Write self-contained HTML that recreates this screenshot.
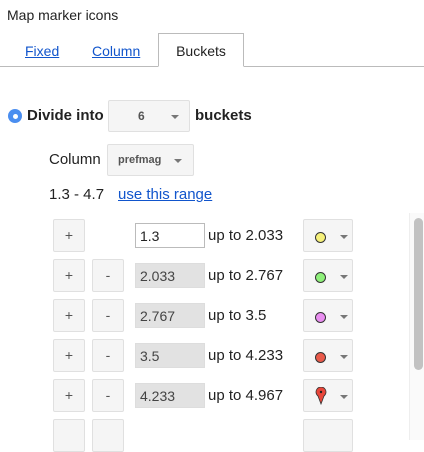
<!DOCTYPE html>
<html><head><style>
*{margin:0;padding:0;box-sizing:border-box}
body{width:424px;height:440px;background:#fff;font-family:"Liberation Sans",Arial,sans-serif;font-size:13px;color:#222;position:relative;overflow:hidden}
.a{position:absolute}
a{color:#15c;text-decoration:underline}
.btn{position:absolute;background:#f5f5f5;border:1px solid #e0e0e0;border-radius:2px;color:#555;text-align:center;font-size:14px}
.inp{position:absolute;width:70px;height:25px;border:1px solid #ddd;background:#e2e2e2;padding:4px 0 0 4px;font-size:14px;color:#444}
.arr{position:absolute;width:0;height:0;border-left:4px solid transparent;border-right:4px solid transparent;border-top:4px solid #777}
.lbl{position:absolute;font-size:14px;color:#222}
.dot{position:absolute;width:11px;height:11px;border-radius:50%;border:1px solid #333}
</style></head><body>
<div class="a" style="left:7px;top:7px;font-size:14px">Map marker icons</div>
<div class="a" style="left:0;top:66px;width:424px;height:1px;background:#bbb"></div>
<a class="a" style="left:25px;top:43px;font-size:14px">Fixed</a>
<a class="a" style="left:92px;top:43px;font-size:14px">Column</a>
<div class="a" style="left:158px;top:33px;width:86px;height:34px;border:1px solid #bbb;border-bottom:1px solid #fff;background:#fff;text-align:center;padding-top:9px;font-size:14px">Buckets</div>
<div class="a" style="left:8px;top:109px;width:14px;height:14px;border-radius:50%;background:#4a8ef0"></div>
<div class="a" style="left:12.5px;top:113.5px;width:5px;height:5px;border-radius:50%;background:#fff"></div>
<div class="a" style="left:27px;top:107px;font-weight:bold;font-size:15px">Divide into</div>
<div class="btn" style="left:108px;top:100px;width:82px;height:32px"><span class="a" style="left:29px;top:8px;font-weight:bold;font-size:12px;color:#555">6</span><span class="arr" style="left:62px;top:14px"></span></div>
<div class="a" style="left:195px;top:107px;font-weight:bold;font-size:15px">buckets</div>
<div class="a" style="left:49px;top:151px;font-size:15px">Column</div>
<div class="btn" style="left:107px;top:144px;width:87px;height:32px"><span class="a" style="left:10px;top:9px;font-weight:bold;font-size:11px;color:#555">prefmag</span><span class="arr" style="left:66px;top:14px"></span></div>
<div class="a" style="left:49px;top:186px;font-size:15px">1.3 - 4.7</div>
<a class="a" style="left:118px;top:186px;font-size:15px">use this range</a>

<div class="btn" style="left:53px;top:219px;width:32px;height:33px;line-height:30px">+</div>
<div class="inp" style="left:135px;top:223px;background:#fff;border-color:#bbb;color:#222">1.3</div>
<div class="lbl" style="left:208px;top:227px;font-size:15px">up to 2.033</div>
<div class="btn" style="left:303px;top:219px;width:50px;height:33px"><span class="dot" style="left:11px;top:12px;background:#f5f07a"></span><span class="arr" style="left:36px;top:15px"></span></div>

<div class="btn" style="left:53px;top:259px;width:32px;height:33px;line-height:30px">+</div>
<div class="btn" style="left:92px;top:259px;width:32px;height:33px;line-height:30px">-</div>
<div class="inp" style="left:135px;top:263px">2.033</div>
<div class="lbl" style="left:208px;top:267px;font-size:15px">up to 2.767</div>
<div class="btn" style="left:303px;top:259px;width:50px;height:33px"><span class="dot" style="left:11px;top:12px;background:#8ef07a"></span><span class="arr" style="left:36px;top:15px"></span></div>

<div class="btn" style="left:53px;top:299px;width:32px;height:33px;line-height:30px">+</div>
<div class="btn" style="left:92px;top:299px;width:32px;height:33px;line-height:30px">-</div>
<div class="inp" style="left:135px;top:303px">2.767</div>
<div class="lbl" style="left:208px;top:307px;font-size:15px">up to 3.5</div>
<div class="btn" style="left:303px;top:299px;width:50px;height:33px"><span class="dot" style="left:11px;top:12px;background:#e98ef0"></span><span class="arr" style="left:36px;top:15px"></span></div>

<div class="btn" style="left:53px;top:339px;width:32px;height:33px;line-height:30px">+</div>
<div class="btn" style="left:92px;top:339px;width:32px;height:33px;line-height:30px">-</div>
<div class="inp" style="left:135px;top:343px">3.5</div>
<div class="lbl" style="left:208px;top:347px;font-size:15px">up to 4.233</div>
<div class="btn" style="left:303px;top:339px;width:50px;height:33px"><span class="dot" style="left:11px;top:12px;background:#e95a4a"></span><span class="arr" style="left:36px;top:15px"></span></div>

<div class="btn" style="left:53px;top:379px;width:32px;height:33px;line-height:30px">+</div>
<div class="btn" style="left:92px;top:379px;width:32px;height:33px;line-height:30px">-</div>
<div class="inp" style="left:135px;top:383px">4.233</div>
<div class="lbl" style="left:208px;top:387px;font-size:15px">up to 4.967</div>
<div class="btn" style="left:303px;top:379px;width:50px;height:33px"><svg class="a" style="left:11px;top:7px" width="12" height="18" viewBox="0 0 12 18"><path d="M6 17 L3 9 A5 5 0 1 1 9 9 Z" fill="#e8463a" stroke="#333" stroke-width="0.8"/><circle cx="6" cy="5" r="1.2" fill="#222"/></svg><span class="arr" style="left:36px;top:15px"></span></div>

<div class="btn" style="left:53px;top:419px;width:32px;height:33px"></div>
<div class="btn" style="left:92px;top:419px;width:32px;height:33px"></div>
<div class="btn" style="left:303px;top:419px;width:50px;height:33px"></div>
<div class="a" style="left:409px;top:213px;width:15px;height:227px;background:#fafafa;border-left:1px solid #eee"></div>
<div class="a" style="left:414px;top:218px;width:9px;height:152px;background:#c2c2c2;border-radius:5px"></div>
</body></html>
